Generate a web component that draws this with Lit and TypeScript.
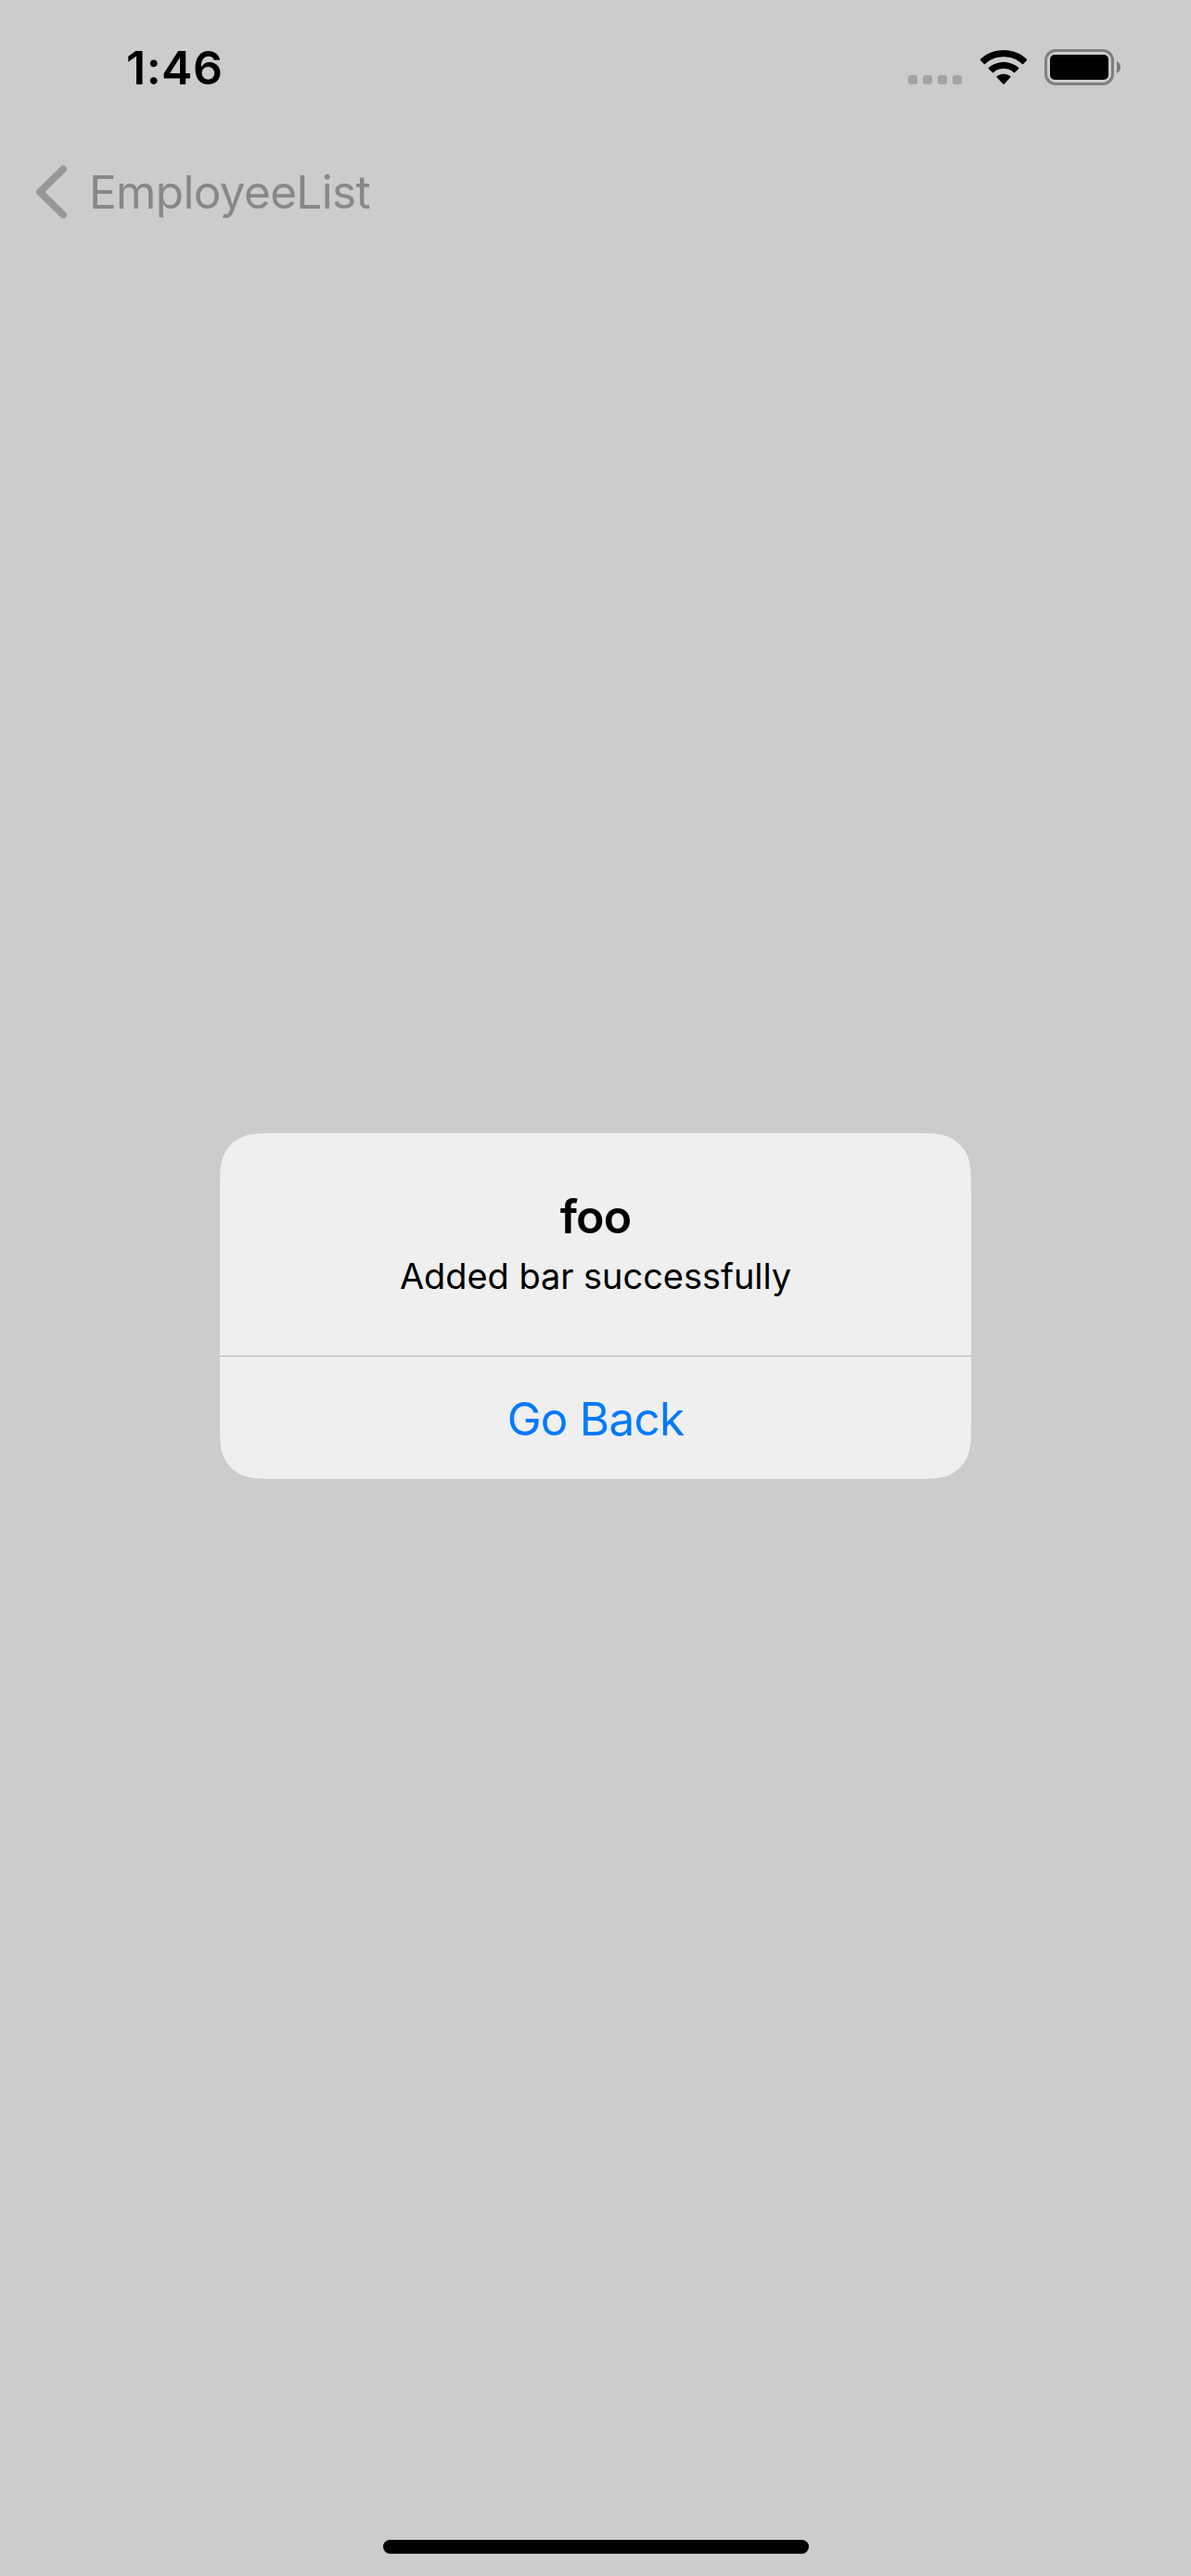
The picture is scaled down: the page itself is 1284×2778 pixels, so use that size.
import { LitElement, html, css } from "lit";
import { customElement, property } from "lit/decorators.js";

@customElement("status-bar")
class StatusBar extends LitElement {
  @property() time = "";

  static styles = css`
    :host {
      display: flex;
      align-items: flex-start;
      justify-content: space-between;
      height: 60px;
      padding: 43px 76px 0 136px;
      color: #000;
    }
    .time {
      font-size: 50px;
      font-weight: 600;
      line-height: 60px;
      letter-spacing: 0.5px;
    }
    .indicators {
      display: flex;
      align-items: center;
      height: 59px;
    }
    .signal {
      display: flex;
      gap: 6px;
      padding-top: 27px;
      margin-right: 19px;
    }
    .dot {
      width: 10px;
      height: 10px;
      border-radius: 3px;
      background: #a3a3a3;
    }
    .wifi {
      display: block;
      margin-right: 18px;
    }
    .battery {
      display: block;
    }
  `;

  render() {
    return html`
      <div class="time">${this.time}</div>
      <div class="indicators">
        <div class="signal">
          ${[0, 1, 2, 3].map(() => html`<span class="dot"></span>`)}
        </div>
        <svg class="wifi" width="52" height="39" viewBox="0 0 52 39">
          <path d="M26 1C35.8 1 44.8 4.8 51 10.8Q51.6 11.4 51 12L47.2 15.9Q46.6 16.5 46 15.9C40.600 10.900 33.700 8.200 26 8.200S11.400 10.900 6 15.900Q5.400 16.500 4.800 15.900L1 12Q.4 11.400 1 10.800C7.200 4.800 16.200 1 26 1Z" />
          <path d="M26 13.900C32.200 13.900 37.900 16.200 42.200 20Q42.800 20.600 42.200 21.200L38.200 25.100Q37.600 25.700 37 25.200C34 22.600 30.200 21.100 26 21.100S18 22.600 15 25.200Q14.400 25.700 13.800 25.100L9.800 21.200Q9.200 20.600 9.800 20C14.100 16.200 19.800 13.900 26 13.900Z" />
          <path d="M26 26.800C28.800 26.800 31.300 27.700 33.300 29.200Q34 29.800 33.300 30.500L26.700 37.400Q26 38 25.300 37.400L18.700 30.500Q18 29.800 18.700 29.200C20.700 27.700 23.200 26.800 26 26.800Z" />
        </svg>
        <svg class="battery" width="82" height="39" viewBox="0 0 82 39">
          <rect x="1.5" y="1.5" width="72" height="36" rx="10.500" fill="none" stroke="#7f7f7f" stroke-width="3" />
          <rect x="6" y="6" width="63" height="27" rx="5" />
          <path d="M78 13C80.600 14.200 82 16.700 82 19.500S80.600 24.800 78 26Z" fill="#7a7a7a" />
        </svg>
      </div>
    `;
  }
}

@customElement("nav-bar")
class NavBar extends LitElement {
  @property() label = "";

  static styles = css`
    :host {
      display: flex;
      align-items: center;
      height: 132px;
      padding: 38px 0 0 38px;
      color: #888;
    }
    .chevron {
      display: block;
      margin-right: 23px;
    }
    .label {
      font-size: 49.5px;
      line-height: 60px;
      letter-spacing: -0.67px;
    }
  `;

  render() {
    return html`
      <svg class="chevron" width="35" height="58" viewBox="0 0 35 58">
        <path d="M30.200 4.300L5 29L30.200 53.700" fill="none" stroke="#979797" stroke-width="7.500" stroke-linecap="round" stroke-linejoin="round" />
      </svg>
      <div class="label">${this.label}</div>
    `;
  }
}

@customElement("alert-card")
class AlertCard extends LitElement {
  @property() heading = "";
  @property() message = "";
  @property() action = "";

  static styles = css`
    :host {
      display: flex;
      flex-direction: column;
      width: 810px;
      height: 373px;
      background: #efefef;
      clip-path: path(
        "M64.200 0H745.800C764.300 0 773.500 0 783.500 3.150C794.350 7.100 802.900 15.650 806.850 26.500C810 36.500 810 45.700 810 64.200V308.800C810 327.300 810 336.500 806.850 346.500C802.900 357.350 794.350 365.900 783.500 369.850C773.500 373 764.300 373 745.800 373H64.200C45.700 373 36.500 373 26.500 369.850C15.650 365.900 7.100 357.350 3.150 346.500C0 336.500 0 327.300 0 308.800V64.200C0 45.700 0 36.500 3.150 26.500C7.100 15.650 15.650 7.100 26.500 3.150C36.500 0 45.700 0 64.200 0Z"
      );
    }
    .body {
      display: flex;
      flex-direction: column;
      align-items: center;
      gap: 10px;
      box-sizing: border-box;
      height: 240px;
      padding-top: 60px;
      color: #000;
    }
    .heading {
      font-size: 50px;
      font-weight: 600;
      line-height: 60px;
      letter-spacing: -0.8px;
    }
    .message {
      font-size: 38px;
      line-height: 48px;
      letter-spacing: -0.06px;
    }
    .action {
      box-sizing: border-box;
      height: 133px;
      padding: 1px 0 0;
      border: 0;
      border-top: 1px solid #b0b0b0;
      background: none;
      color: #007aff;
      font: inherit;
      font-size: 49.5px;
      line-height: 60px;
      letter-spacing: -0.8px;
    }
  `;

  render() {
    return html`
      <div class="body">
        <div class="heading">${this.heading}</div>
        <div class="message">${this.message}</div>
      </div>
      <button class="action">${this.action}</button>
    `;
  }
}

@customElement("app-root")
class AppRoot extends LitElement {
  static styles = css`
    :host {
      display: flex;
      flex-direction: column;
      box-sizing: border-box;
      width: 1284px;
      height: 2778px;
      background: #ccc;
      font-family: Inter, "Liberation Sans", sans-serif;
      overflow: hidden;
    }
    .content {
      display: flex;
      flex: 1;
      flex-direction: column;
      align-items: center;
      justify-content: space-between;
    }
    .card {
      margin-top: 949px;
    }
    .home {
      width: 459px;
      height: 15px;
      margin-bottom: 24px;
      border-radius: 7.500px;
      background: #000;
    }
  `;

  render() {
    return html`
      <status-bar time="1:46"></status-bar>
      <nav-bar label="EmployeeList"></nav-bar>
      <div class="content">
        <alert-card
          class="card"
          heading="foo"
          message="Added bar successfully"
          action="Go Back"
        ></alert-card>
        <div class="home"></div>
      </div>
    `;
  }
}
